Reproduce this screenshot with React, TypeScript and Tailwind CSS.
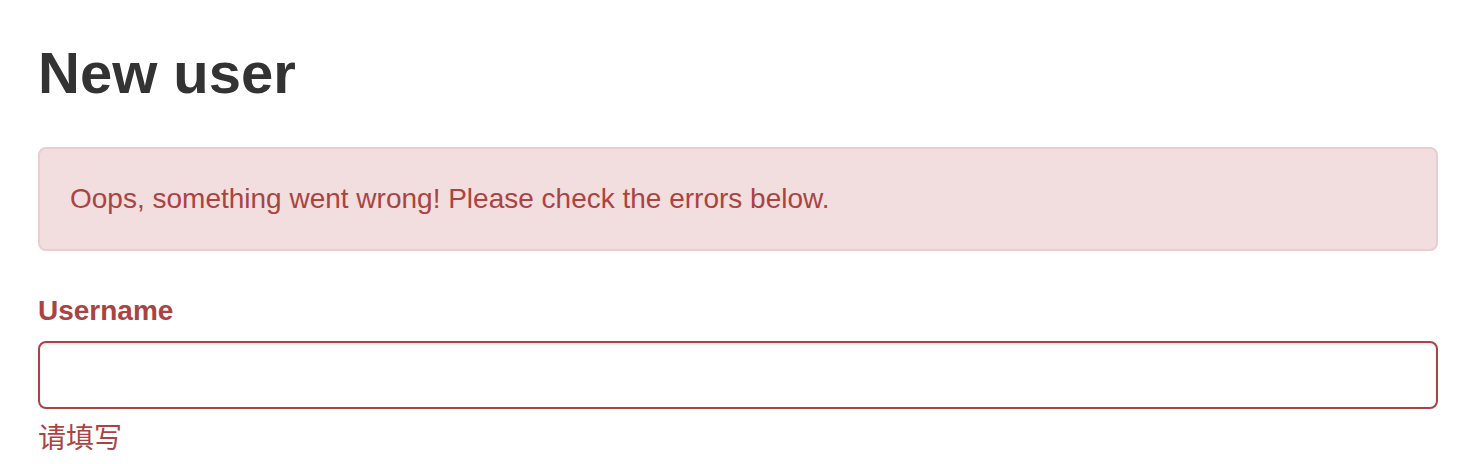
export default function App() {
  return (
    <div className="bg-white pt-[41px] pr-[24px] pl-[38px] font-['Liberation_Sans','Noto_Sans_CJK_SC',sans-serif]">
      <h1 className="mb-[42px] text-[58px] leading-[64px] font-bold text-[#333333]">
        New user
      </h1>

      <div className="mb-[40px] rounded-[8px] border-2 border-[#ebccd1] bg-[#f2dede] p-[30px] text-[28px] leading-[40px] text-[#a94442]">
        Oops, something went wrong! Please check the errors below.
      </div>

      <form>
        <label
          htmlFor="username"
          className="mb-[10px] block text-[28px] leading-[40px] font-bold text-[#a94442]"
        >
          Username
        </label>
        <input
          id="username"
          type="text"
          className="block h-[68px] w-full rounded-[8px] border-2 border-[#a94442] bg-white px-[24px] text-[28px] text-[#555555] shadow-[inset_0_2px_2px_rgba(0,0,0,0.075)] outline-none"
        />
        <p className="mt-[10px] text-[28px] leading-[40px] text-[#a94442]">请填写</p>
      </form>
    </div>
  );
}
